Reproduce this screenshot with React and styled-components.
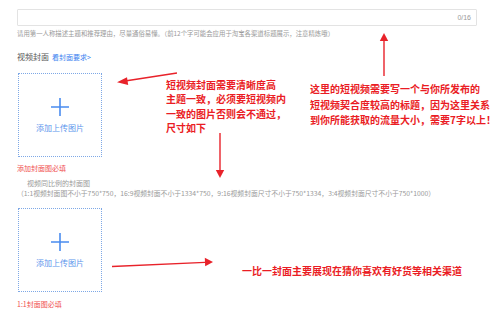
import React from "react";
import styled, { createGlobalStyle } from "styled-components";

const Global = createGlobalStyle`
  html, body { margin: 0; padding: 0; background: #fff; }
  body { font-family: "Noto Sans CJK SC", "Noto Sans", sans-serif; }
`;

const Page = styled.div`
  position: relative;
  width: 499px;
  height: 311px;
  overflow: hidden;
  box-sizing: border-box;
  padding: 9px 0 0 17px;
  background: #fff;
`;

const TitleInput = styled.div`
  box-sizing: border-box;
  width: 460px;
  height: 17px;
  border: 1px solid #e3e3e3;
  border-radius: 1px;
  display: flex;
  align-items: center;
  justify-content: flex-end;
  padding-right: 5px;
`;

const Counter = styled.span`
  font-family: "Liberation Sans", sans-serif;
  font-size: 7px;
  color: #999;
`;

const Hint = styled.div`
  margin-top: ${(p) => p.$mt || 0}px;
  padding-left: ${(p) => p.$indent || 0}px;
  font-size: ${(p) => p.$fs || 7}px;
  line-height: ${(p) => p.$lh || 10}px;
  color: ${(p) => p.$color || "#9a9a9a"};
  white-space: nowrap;
`;

const SectionTitle = styled.div`
  margin-top: 12px;
  display: flex;
  align-items: baseline;
  gap: 3px;
  font-size: 8px;
  line-height: 12px;
  color: #555;
`;

const Link = styled.span`
  font-size: 7px;
  color: #3a7ff0;
`;

const Upload = styled.div`
  box-sizing: border-box;
  margin-top: ${(p) => p.$mt}px;
  margin-left: 1px;
  width: 84px;
  height: 84px;
  border: 1px dotted #7ea8e6;
  display: flex;
  flex-direction: column;
  align-items: center;
  padding-top: 24px;
  gap: 7px;
`;

const UploadText = styled.div`
  font-size: 8px;
  line-height: 10px;
  color: #5a95ec;
`;

const Overlay = styled.svg`
  position: absolute;
  left: 0;
  top: 0;
  pointer-events: none;
`;

const Note = styled.div`
  position: absolute;
  left: ${(p) => p.$x}px;
  top: ${(p) => p.$y}px;
  font-size: 10px;
  font-weight: 700;
  line-height: ${(p) => p.$lh}px;
  color: #ea1c24;
  white-space: nowrap;
`;

const Plus = () => (
  <svg width="18" height="18" viewBox="0 0 18 18">
    <path d="M9 0v18M0 9h18" stroke="#4a8cef" strokeWidth="1.6" />
  </svg>
);

const RED = "#e8222a";

export default function App() {
  return (
    <>
      <Global />
      <Page>
        <TitleInput>
          <Counter>0/16</Counter>
        </TitleInput>
        <Hint $mt={3} $fs={6.4}>
          请用第一人称描述主题和推荐理由，尽量通俗易懂。（前12个字可能会应用于淘宝各渠道标题展示，注意精炼哦）
        </Hint>
        <SectionTitle>
          视频封面<Link>看封面要求&gt;</Link>
        </SectionTitle>
        <Upload $mt={10}>
          <Plus />
          <UploadText>添加上传图片</UploadText>
        </Upload>
        <Hint $mt={6} $color="#f0504f">添加封面图必填</Hint>
        <Hint $mt={6} $indent={10} $lh={9.5}>视频同比例的封面图</Hint>
        <Hint $lh={9.5} $fs={6.8}>
          （1:1视频封面图不小于750*750，16:9视频封面不小于1334*750，9:16视频封面尺寸不小于750*1334，3:4视频封面尺寸不小于750*1000）
        </Hint>
        <Upload $mt={10}>
          <Plus />
          <UploadText>添加上传图片</UploadText>
        </Upload>
        <Hint $mt={7} $color="#f0504f">1:1封面图必填</Hint>

        <Overlay width="499" height="311" viewBox="0 0 499 311">
          <g stroke={RED} strokeWidth="1.4" fill="none">
            <line x1="177" y1="73" x2="125" y2="81" />
            <line x1="220" y1="133" x2="220" y2="171" />
            <line x1="384" y1="76" x2="384" y2="40" />
            <line x1="112" y1="266.5" x2="205" y2="262.4" />
          </g>
          <g fill={RED}>
            <polygon points="117,82.3 127,77.3 128.2,85" />
            <polygon points="220,178 215.8,170 224.2,170" />
            <polygon points="384,33 379.8,41 388.2,41" />
            <polygon points="213,262 204.8,257.8 205.2,266.2" />
          </g>
        </Overlay>
        <Note $x={166} $y={78} $lh={14.3}>
          短视频封面需要清晰度高
          <br />
          主题一致，必须要短视频内
          <br />
          一致的图片否则会不通过，
          <br />
          尺寸如下
        </Note>
        <Note $x={310} $y={81} $lh={15.5}>
          这里的短视频需要写一个与你所发布的
          <br />
          短视频契合度较高的标题，因为这里关系
          <br />
          到你所能获取的流量大小，需要7字以上！
        </Note>
        <Note $x={242} $y={263.5} $lh={14}>
          一比一封面主要展现在猜你喜欢有好货等相关渠道
        </Note>
      </Page>
    </>
  );
}
